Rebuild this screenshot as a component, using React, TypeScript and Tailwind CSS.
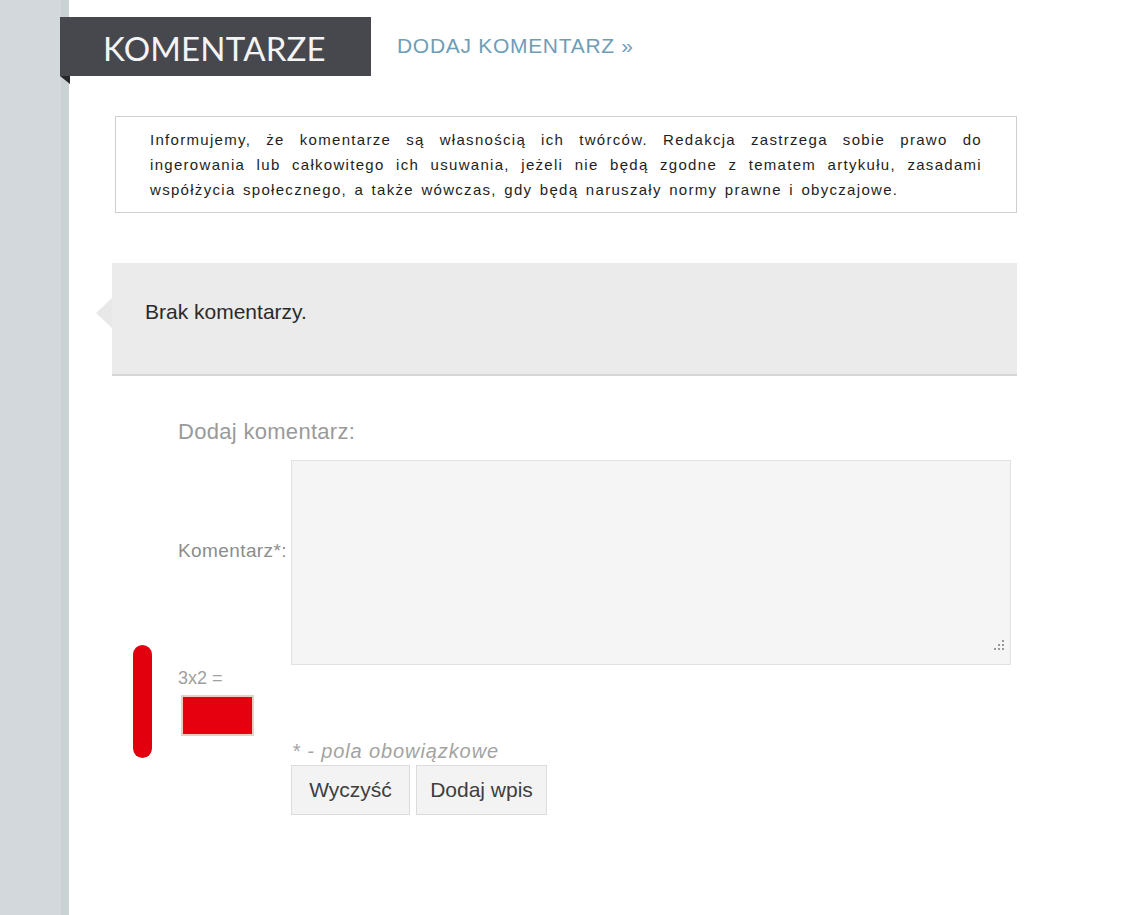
import React from 'react';

const NOTICE = [
  'Informujemy, że komentarze są własnością ich twórców. Redakcja zastrzega sobie prawo do',
  'ingerowania lub całkowitego ich usuwania, jeżeli nie będą zgodne z tematem artykułu, zasadami',
  'współżycia społecznego, a także wówczas, gdy będą naruszały normy prawne i obyczajowe.',
];

export default function App() {
  return (
    <div className="min-h-[915px] flex bg-white font-['Liberation_Sans',Arial,sans-serif]">
      {/* left column */}
      <aside className="w-[69px] shrink-0 bg-[#d3d8dc] border-r-[8px] border-[#cbd2d3]" />

      <main className="flex-1 pt-[17px]">
        {/* section header */}
        <div className="flex items-center">
          <div className="relative -ml-[9px] w-[311px] h-[59px] bg-[#46484d] flex items-center pl-[43px]">
            <span className="font-['Lato',sans-serif] text-[33px] leading-none text-[#f4f4f4] tracking-[0.2px] pt-[3px]">
              KOMENTARZE
            </span>
            <span className="absolute left-0 top-full w-0 h-0 border-t-[8px] border-t-[#26272a] border-l-[10px] border-l-transparent" />
          </div>
          <a href="#dodaj" className="ml-[26px] text-[21px] leading-none text-[#6f9db6] tracking-[0.7px] pb-[2px]">
            DODAJ KOMENTARZ »
          </a>
        </div>

        {/* notice */}
        <div className="mt-[40px] ml-[46px] w-[902px] border border-[#cfcfcf] px-[34px] py-[10px] text-[15px] leading-[25px] text-[#1e1e1e] tracking-[1.3px] [word-spacing:2px]">
          {NOTICE.map((line, i) => (
            <div
              key={i}
              className={i < NOTICE.length - 1 ? 'text-justify [text-align-last:justify]' : ''}
            >
              {line}
            </div>
          ))}
        </div>

        {/* empty comments */}
        <div className="relative mt-[50px] ml-[43px] w-[905px] h-[113px] bg-[#ebebeb] border-b-2 border-[#d6d6d6] flex items-center pl-[33px] pb-[14px]">
          <span className="absolute -left-[16px] top-[35px] w-0 h-0 border-y-[15px] border-y-transparent border-r-[16px] border-r-[#e8e8e8]" />
          <span className="text-[21px] leading-none text-[#2a2a2a]">Brak komentarzy.</span>
        </div>

        {/* form */}
        <form id="dodaj" className="ml-[109px] mt-[43px]" onSubmit={(e) => e.preventDefault()}>
          <h3 className="text-[22px] leading-[26px] text-[#9a9a9a] tracking-[0.3px]">Dodaj komentarz:</h3>

          <div className="mt-[15px] flex">
            <label className="w-[113px] shrink-0 pt-[80px] text-[19px] leading-[22px] text-[#8c8c8c] tracking-[0.4px]">
              Komentarz*:
            </label>
            <div className="relative w-[720px] h-[205px]">
              <textarea
                readOnly
                className="w-full h-full resize-none bg-[#f5f5f5] border border-[#e2e2e2] outline-none"
              />
              <svg className="absolute right-[6px] bottom-[14px]" width="12" height="12" viewBox="0 0 12 12" fill="#9a9a9a">
                <rect x="9" y="1" width="2" height="2" />
                <rect x="5" y="5" width="2" height="2" />
                <rect x="9" y="5" width="2" height="2" />
                <rect x="1" y="9" width="2" height="2" />
                <rect x="5" y="9" width="2" height="2" />
                <rect x="9" y="9" width="2" height="2" />
              </svg>
            </div>
          </div>

          {/* captcha */}
          <div className="relative mt-[3px] w-[113px]">
            <span className="absolute -left-[45px] -top-[23px] w-[19px] h-[113px] rounded-full bg-[#e2000f]" />
            <div className="text-[18px] leading-[20px] text-[#a0a0a0]">3x2 =</div>
            <div className="mt-[7px] ml-[3px] w-[73px] h-[41px] bg-[#e6000f] border-2 border-[#f1c9c9]" />
          </div>

          <div className="ml-[113px] mt-[4px]">
            <p className="text-[20px] leading-[22px] italic text-[#a3a3a3] tracking-[0.9px] pl-[1px]">* - pola obowiązkowe</p>
            <div className="mt-[3px] flex gap-[6px]">
              <button type="reset" className="w-[119px] h-[50px] bg-[#f3f3f3] border border-[#dcdcdc] text-[21px] text-[#3e3e3e]">
                Wyczyść
              </button>
              <button type="submit" className="w-[131px] h-[50px] bg-[#f3f3f3] border border-[#dcdcdc] text-[21px] text-[#3e3e3e]">
                Dodaj wpis
              </button>
            </div>
          </div>
        </form>
      </main>
    </div>
  );
}
